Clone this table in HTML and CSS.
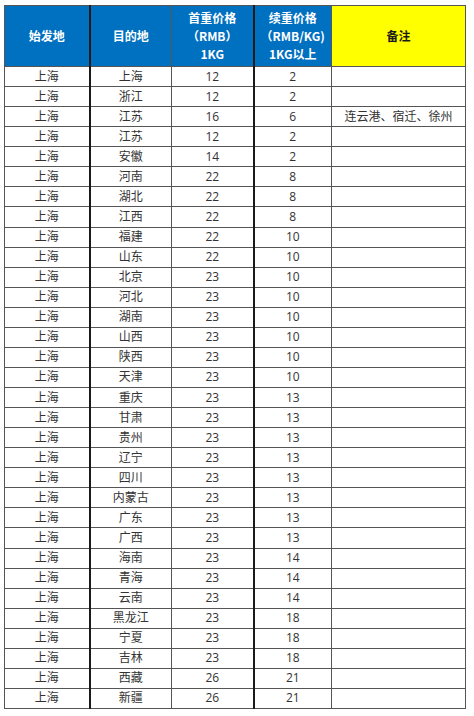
FILE: index.html
```html
<!DOCTYPE html>
<html lang="zh">
<head>
<meta charset="utf-8">
<link rel="stylesheet" href="styles.css">
</head>
<body>
<table class="rates">
  <colgroup>
    <col class="c1"><col class="c2"><col class="c3"><col class="c4"><col class="c5">
  </colgroup>
  <thead>
    <tr>
      <th class="blue sep">始发地</th>
      <th class="blue">目的地</th>
      <th class="blue sep">首重价格<br>（RMB）<br>1KG</th>
      <th class="blue">续重价格<br>（RMB/KG)<br>1KG以上</th>
      <th class="yellow">备注</th>
    </tr>
  </thead>
  <tbody>
    <tr><td class="sep">上海</td><td>上海</td><td class="sep">12</td><td>2</td><td></td></tr>
    <tr><td class="sep">上海</td><td>浙江</td><td class="sep">12</td><td>2</td><td></td></tr>
    <tr><td class="sep">上海</td><td>江苏</td><td class="sep">16</td><td>6</td><td>连云港、宿迁、徐州</td></tr>
    <tr><td class="sep">上海</td><td>江苏</td><td class="sep">12</td><td>2</td><td></td></tr>
    <tr><td class="sep">上海</td><td>安徽</td><td class="sep">14</td><td>2</td><td></td></tr>
    <tr><td class="sep">上海</td><td>河南</td><td class="sep">22</td><td>8</td><td></td></tr>
    <tr><td class="sep">上海</td><td>湖北</td><td class="sep">22</td><td>8</td><td></td></tr>
    <tr><td class="sep">上海</td><td>江西</td><td class="sep">22</td><td>8</td><td></td></tr>
    <tr><td class="sep">上海</td><td>福建</td><td class="sep">22</td><td>10</td><td></td></tr>
    <tr><td class="sep">上海</td><td>山东</td><td class="sep">22</td><td>10</td><td></td></tr>
    <tr><td class="sep">上海</td><td>北京</td><td class="sep">23</td><td>10</td><td></td></tr>
    <tr><td class="sep">上海</td><td>河北</td><td class="sep">23</td><td>10</td><td></td></tr>
    <tr><td class="sep">上海</td><td>湖南</td><td class="sep">23</td><td>10</td><td></td></tr>
    <tr><td class="sep">上海</td><td>山西</td><td class="sep">23</td><td>10</td><td></td></tr>
    <tr><td class="sep">上海</td><td>陕西</td><td class="sep">23</td><td>10</td><td></td></tr>
    <tr><td class="sep">上海</td><td>天津</td><td class="sep">23</td><td>10</td><td></td></tr>
    <tr><td class="sep">上海</td><td>重庆</td><td class="sep">23</td><td>13</td><td></td></tr>
    <tr><td class="sep">上海</td><td>甘肃</td><td class="sep">23</td><td>13</td><td></td></tr>
    <tr><td class="sep">上海</td><td>贵州</td><td class="sep">23</td><td>13</td><td></td></tr>
    <tr><td class="sep">上海</td><td>辽宁</td><td class="sep">23</td><td>13</td><td></td></tr>
    <tr><td class="sep">上海</td><td>四川</td><td class="sep">23</td><td>13</td><td></td></tr>
    <tr><td class="sep">上海</td><td>内蒙古</td><td class="sep">23</td><td>13</td><td></td></tr>
    <tr><td class="sep">上海</td><td>广东</td><td class="sep">23</td><td>13</td><td></td></tr>
    <tr><td class="sep">上海</td><td>广西</td><td class="sep">23</td><td>13</td><td></td></tr>
    <tr><td class="sep">上海</td><td>海南</td><td class="sep">23</td><td>14</td><td></td></tr>
    <tr><td class="sep">上海</td><td>青海</td><td class="sep">23</td><td>14</td><td></td></tr>
    <tr><td class="sep">上海</td><td>云南</td><td class="sep">23</td><td>14</td><td></td></tr>
    <tr><td class="sep">上海</td><td>黑龙江</td><td class="sep">23</td><td>18</td><td></td></tr>
    <tr><td class="sep">上海</td><td>宁夏</td><td class="sep">23</td><td>18</td><td></td></tr>
    <tr><td class="sep">上海</td><td>吉林</td><td class="sep">23</td><td>18</td><td></td></tr>
    <tr><td class="sep">上海</td><td>西藏</td><td class="sep">26</td><td>21</td><td></td></tr>
    <tr><td class="sep">上海</td><td>新疆</td><td class="sep">26</td><td>21</td><td></td></tr>
  </tbody>
</table>
</body>
</html>
```

FILE: styles.css
```css
html, body {
  margin: 0;
  padding: 0;
  background: #ffffff;
}
body {
  padding: 5px 0 0 4px;
  font-family: "Open Sans", "Noto Sans CJK SC", sans-serif;
  color: #333333;
}
.rates {
  border-collapse: collapse;
  table-layout: fixed;
  width: 461px;
  border: 1px solid #3a3a3a;
}
.c1 { width: 85px; }
.c2 { width: 82px; }
.c3 { width: 82px; }
.c4 { width: 78px; }
.c5 { width: 134px; }
.rates th,
.rates td {
  border: 1px solid #555555;
  text-align: center;
  padding: 0;
  font-size: 12px;
  font-weight: normal;
  overflow: hidden;
  white-space: nowrap;
}
.rates th {
  height: 60px;
  line-height: 18px;
  font-weight: bold;
  font-family: "Noto Sans CJK SC", sans-serif;
  font-size: 12px;
}
.rates td {
  height: 19.07px;
  line-height: 18px;
  font-family: "Open Sans", "Noto Sans CJK SC", sans-serif;
}
.rates .sep {
  border-right: 2px solid #1a1a1a;
}
.blue {
  background: #0070c0;
  color: #ffffff;
  border-color: #333333;
}
.yellow {
  background: #ffff00;
  color: #1a1a1a;
}
```
